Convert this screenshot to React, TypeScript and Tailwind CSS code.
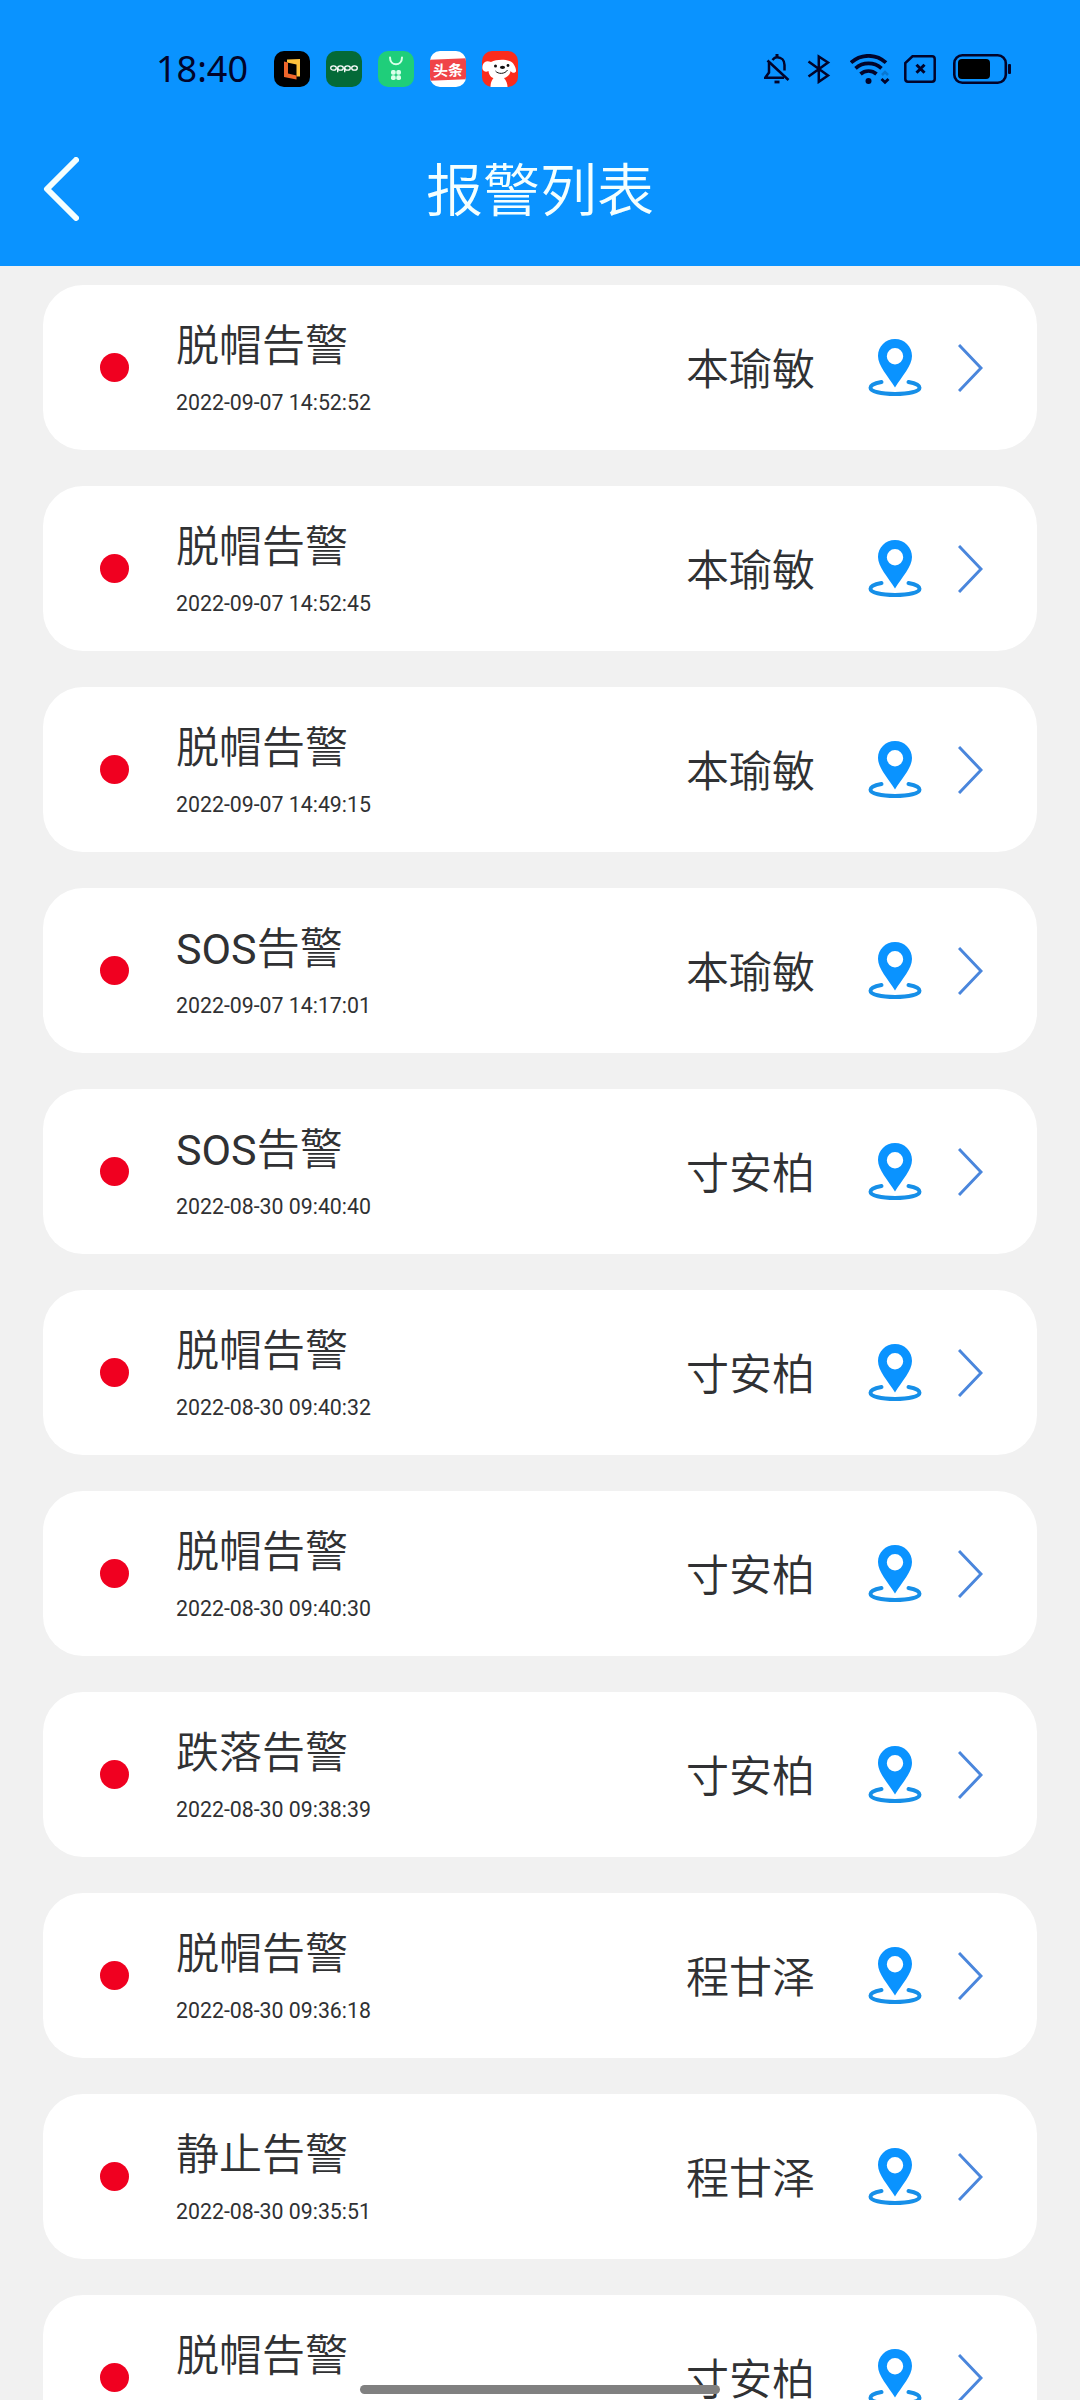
const alarms = [
  { id: 1, type: "脱帽告警", time: "2022-09-07 14:52:52", name: "本瑜敏" },
  { id: 2, type: "脱帽告警", time: "2022-09-07 14:52:45", name: "本瑜敏" },
  { id: 3, type: "脱帽告警", time: "2022-09-07 14:49:15", name: "本瑜敏" },
  { id: 4, type: "SOS告警", time: "2022-09-07 14:17:01", name: "本瑜敏" },
  { id: 5, type: "SOS告警", time: "2022-08-30 09:40:40", name: "寸安柏" },
  { id: 6, type: "脱帽告警", time: "2022-08-30 09:40:32", name: "寸安柏" },
  { id: 7, type: "脱帽告警", time: "2022-08-30 09:40:30", name: "寸安柏" },
  { id: 8, type: "跌落告警", time: "2022-08-30 09:38:39", name: "寸安柏" },
  { id: 9, type: "脱帽告警", time: "2022-08-30 09:36:18", name: "程甘泽" },
  { id: 10, type: "静止告警", time: "2022-08-30 09:35:51", name: "程甘泽" },
  { id: 11, type: "脱帽告警", time: "", name: "寸安柏" },
];

type Alarm = (typeof alarms)[number];

function AppIcons() {
  return (
    <div className="flex gap-4">
      <svg className="size-9" viewBox="0 0 36 36">
        <rect width="36" height="36" rx="10" fill="#000" />
        <path d="M13 8.5 L26 8 V25.5 H22.500 V13.500 L13 11.500 Z" fill="#fdc23c" />
        <path d="M10 10.500 L14 11.500 V22.500 L22.500 24.500 V28.500 L10 26 Z" fill="#f0662b" />
      </svg>
      <div className="flex size-9 items-center justify-center rounded-[10px] bg-[#046a38]">
        <svg className="h-3 w-7" viewBox="0 0 28 12" fill="none" stroke="#fff" strokeWidth="1.300">
          <ellipse cx="3.500" cy="5" rx="2.800" ry="2.200" />
          <ellipse cx="10.500" cy="5" rx="2.800" ry="2.200" />
          <ellipse cx="17.500" cy="5" rx="2.800" ry="2.200" />
          <ellipse cx="24.500" cy="5" rx="2.800" ry="2.200" />
          <path d="M7.700 5 V9.200 M14.700 5 V9.200" />
        </svg>
      </div>
      <svg className="size-9" viewBox="0 0 36 36">
        <rect width="36" height="36" rx="10" fill="#1fce7a" />
        <path d="M12 6.500 C12 15.500 24 15.500 24 6.500" fill="none" stroke="#d8ffe9" strokeWidth="2" strokeLinecap="round" />
        <g fill="#d8ffe9">
          <rect x="13" y="19" width="4.700" height="4.700" rx="1.800" />
          <rect x="18.300" y="19" width="4.700" height="4.700" rx="1.800" />
          <rect x="13" y="24.300" width="4.700" height="4.700" rx="1.800" />
          <rect x="18.300" y="24.300" width="4.700" height="4.700" rx="1.800" />
        </g>
      </svg>
      <div className="flex size-9 items-center justify-center overflow-hidden rounded-[10px] bg-white">
        <div className="flex h-[21px] w-9 shrink-0 -skew-y-2 items-center justify-center bg-[#f04448] font-['Noto_Sans_CJK_SC',sans-serif] text-[15px] leading-none font-bold whitespace-nowrap text-white">
          头条
        </div>
      </div>
      <svg className="size-9" viewBox="0 0 36 36">
        <rect width="36" height="36" rx="10" fill="#fb2c1c" />
        <path
          d="M3 11 C5 9.500 7 10.500 9 11 C14 8.500 22 8 27.500 10 C31 10.500 34.500 17 34 20.500 C32.500 22.500 30 22 28.500 20 C28 25 23 28 16.500 28 C10 28 7 25 6.500 20 C4 21.500 1.500 20.500 .500 18 C0 15 1 12.500 3 11 Z"
          fill="#fff"
        />
        <path d="M11.500 27 H22 C24.500 30 25.500 33 25.500 36 H8.500 C8.500 33 9 30 11.500 27 Z" fill="#fff" />
        <circle cx="13.500" cy="15" r="1.500" fill="#111" />
        <circle cx="26" cy="14.500" r="1.400" fill="#111" />
        <ellipse cx="20.500" cy="16.300" rx="2.600" ry="1.600" fill="#111" />
        <path d="M13.500 20 C16 23.300 23 23.300 25.500 19" fill="none" stroke="#111" strokeWidth="1" />
      </svg>
    </div>
  );
}

function SystemIcons() {
  return (
    <div className="flex h-[30px] text-[#02042a]">
      <svg className="h-[30px] w-[26px]" viewBox="0 0 26 30" fill="none" stroke="currentColor" strokeWidth="2.500">
        <path d="M8.500 6 C10 4 11 3.300 13 3.300 C17.500 3.300 20.500 6.500 20.500 11 V16.500" />
        <path d="M13 0 V4" strokeWidth="3" />
        <path d="M3.500 6.500 L24.500 26" />
        <path d="M5 8.500 V18.500 L1.200 23.800 H20" />
        <path d="M10.500 28 H15.500" strokeWidth="2.800" />
      </svg>
      <svg className="ml-[17px] h-[30px] w-[24px]" viewBox="0 0 24 30" fill="none" stroke="currentColor" strokeWidth="2.500">
        <path d="M1.500 7.500 L21 21.500 L11.800 27.800 V2.500 L21 8.500 L1.500 22.500" />
      </svg>
      <svg className="ml-[19px] h-[32px] w-[40px]" viewBox="0 0 40 32" fill="none" stroke="currentColor" strokeWidth="3.700">
        <path d="M1 8.700 C11 -.500 26 -.500 36 8.700" />
        <path d="M5.500 14.300 C13 7.700 24 7.700 31.500 14.300" />
        <path d="M10.500 20 C15 16 22 16 26.500 20" />
        <circle cx="18.500" cy="27" r="3" fill="currentColor" stroke="none" />
        <path d="M32 21 L35 18 L38 21" stroke="#0876d2" strokeWidth="2.500" />
        <path d="M31.500 25 L35 28.300 L38.500 25" strokeWidth="2.800" />
      </svg>
      <svg className="ml-[14px] h-[30px] w-[32px]" viewBox="0 0 32 30" fill="none" stroke="currentColor">
        <path d="M8.500 2.300 H28 Q30.700 2.300 30.700 5 V25 Q30.700 27.700 28 27.700 H4 Q1.300 27.700 1.300 25 V9 Z" strokeWidth="2.500" />
        <path d="M12.500 10.800 L20.500 18.800 M20.500 10.800 L12.500 18.800" strokeWidth="3" />
      </svg>
      <svg className="ml-[17px] h-[30px] w-[58px]" viewBox="0 0 58 30" fill="none">
        <rect x="1.300" y="1.300" width="51.500" height="27.400" rx="8" stroke="currentColor" strokeWidth="2.600" />
        <rect x="5" y="5" width="32" height="20" rx="4" fill="#000" />
        <rect x="55" y="10" width="3" height="10" rx="1" fill="currentColor" />
      </svg>
    </div>
  );
}

function StatusBar() {
  return (
    <div className="flex h-[138px] items-center justify-between pr-[69px] pl-[156px]">
      <div className="flex items-center">
        <span className="w-[118px] font-['Noto_Sans',sans-serif] text-[36px] leading-none text-[#02042a]">18:40</span>
        <AppIcons />
      </div>
      <SystemIcons />
    </div>
  );
}

function LocationIcon() {
  return (
    <svg className="h-[58px] w-[54px]" viewBox="0 0 54 58" fill="none">
      <path
        fillRule="evenodd"
        d="M27 0 C36.500 0 44 7.500 44 17 C44 27 34 37 27 48.500 C20 37 10 27 10 17 C10 7.500 17.500 0 27 0 Z M27 9 A8.200 8.200 0 1 0 27 25.400 A8.200 8.200 0 1 0 27 9 Z"
        fill="#0a93ff"
      />
      <path
        d="M13.500 43 C6 44.300 2.500 46.500 2.500 48.700 C2.500 52.500 13 55 27 55 C41 55 51.500 52.500 51.500 48.700 C51.500 46.500 48 44.300 40.500 43"
        stroke="#168fe8"
        strokeWidth="4"
        strokeLinecap="round"
      />
    </svg>
  );
}

function AlarmCard({ alarm }: { alarm: Alarm }) {
  return (
    <li className="flex h-[165px] shrink-0 items-center rounded-[40px] bg-white pr-[54px] pl-[57px] text-[#303133]">
      <span className="size-[29px] rounded-full bg-[#f00020]" />
      <div className="ml-[47px] flex-1">
        <div className="-mt-1 text-[43px] leading-[60px]">{alarm.type}</div>
        <div className="mt-[13px] h-[27px] text-[21.3px] leading-[28px]">{alarm.time}</div>
      </div>
      <div className="pt-[5px] text-[43px] leading-[60px]">{alarm.name}</div>
      <div className="ml-[53px]">
        <LocationIcon />
      </div>
      <svg className="ml-[36px] h-[48px] w-[25px]" viewBox="0 0 25 48" fill="none">
        <path d="M1 1 L23 24 L1 47" stroke="#4a86dc" strokeWidth="3" />
      </svg>
    </li>
  );
}

export default function App() {
  return (
    <div className="relative flex h-[2400px] w-[1080px] flex-col overflow-hidden bg-[#f1f1f1] font-[Roboto,'Noto_Sans_CJK_SC_DemiLight','Noto_Sans_CJK_SC',sans-serif]">
      <header className="h-[266px] shrink-0 bg-[#0a93ff]">
        <StatusBar />
        <div className="grid h-[102px] grid-cols-[1fr_auto_1fr] items-center">
          <svg className="ml-[43px] h-[64px] w-[36px]" viewBox="0 0 36 64" fill="none">
            <path d="M33 3 L4 32 L33 61" stroke="#f4ffff" strokeWidth="6" strokeLinecap="round" strokeLinejoin="round" />
          </svg>
          <h1 className="pt-[5px] text-[57px] leading-[80px] text-[#f4ffff]">报警列表</h1>
        </div>
      </header>
      <ul className="flex flex-col gap-9 px-[43px] pt-[19px]">
        {alarms.map((alarm) => (
          <AlarmCard key={alarm.id} alarm={alarm} />
        ))}
      </ul>
      <div className="absolute bottom-[6px] left-[360px] h-[9px] w-[360px] rounded-full bg-[#808080]" />
    </div>
  );
}
